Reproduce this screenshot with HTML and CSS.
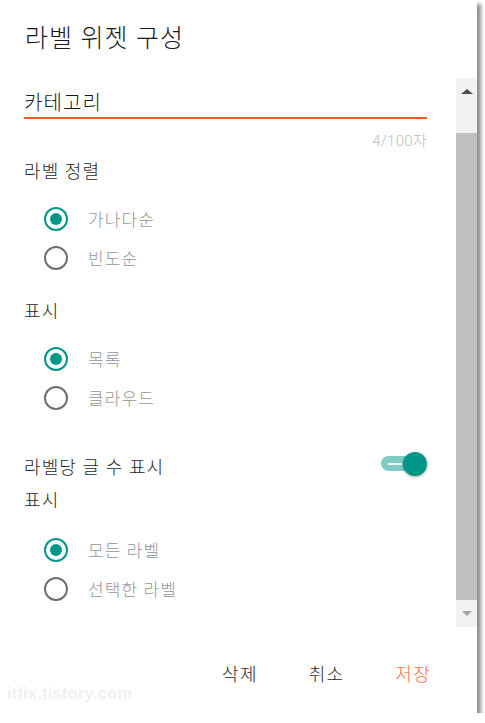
FILE: index.html
```html
<!DOCTYPE html>
<html lang="ko">
<head>
    <meta charset="UTF-8">
    <meta name="viewport" content="width=device-width, initial-scale=1.0">
    <title>라벨 위젯 구성</title>
    <link rel="stylesheet" href="styles.css">
</head>
<body>
    <div class="dialog">
        <h1 class="dialog-title">라벨 위젯 구성</h1>
        <div class="dialog-body">
            <div class="content">
                <div class="field-input">카테고리</div>
                <div class="field-counter">4/100자</div>

                <div class="section-label">라벨 정렬</div>
                <div class="radio-group">
                    <div class="radio-row"><span class="radio checked"></span><span class="radio-text">가나다순</span></div>
                    <div class="radio-row"><span class="radio"></span><span class="radio-text">빈도순</span></div>
                </div>

                <div class="section-label gap-top">표시</div>
                <div class="radio-group">
                    <div class="radio-row"><span class="radio checked"></span><span class="radio-text">목록</span></div>
                    <div class="radio-row"><span class="radio"></span><span class="radio-text">클라우드</span></div>
                </div>

                <div class="toggle-row">
                    <div class="section-label">라벨당 글 수 표시</div>
                    <div class="switch">
                        <span class="switch-track"></span>
                        <span class="switch-thumb"></span>
                    </div>
                </div>
                <div class="section-label small-gap">표시</div>
                <div class="radio-group last">
                    <div class="radio-row"><span class="radio checked"></span><span class="radio-text">모든 라벨</span></div>
                    <div class="radio-row"><span class="radio"></span><span class="radio-text">선택한 라벨</span></div>
                </div>
            </div>
            <div class="scrollbar">
                <div class="scroll-btn"><span class="arrow-up"></span></div>
                <div class="scroll-track"></div>
                <div class="scroll-thumb"></div>
                <div class="scroll-btn"><span class="arrow-down"></span></div>
            </div>
        </div>
        <div class="dialog-actions">
            <button class="action-button">삭제</button>
            <button class="action-button">취소</button>
            <button class="action-button primary">저장</button>
        </div>
        <div class="watermark">itfix.tistory.com</div>
    </div>
</body>
</html>
```

FILE: styles.css
```css
body {
    margin: 0;
    background: #fff;
    font-family: Roboto, "Noto Sans CJK KR", sans-serif;
    font-weight: 300;
    letter-spacing: 0.07em;
}
.dialog {
    position: relative;
    width: 477px;
    height: 713px;
    background: #fff;
    box-shadow: 4px 4px 4px rgba(0, 0, 0, 0.45);
    display: flex;
    flex-direction: column;
}
.dialog-title {
    margin: 0 0 24px;
    padding: 24px 25px 0;
    font-size: 25px;
    font-weight: 300;
    line-height: 30px;
    color: #1a1a1a;
}
.dialog-body {
    display: flex;
    height: 549px;
}
.content {
    flex: 1;
    padding: 0 29px 0 24px;
}
.field-input {
    padding-top: 11px;
    font-size: 20px;
    line-height: 28px;
    color: #1a1a1a;
    border-bottom: 2px solid #ff5722;
}
.field-counter {
    margin-top: 12px;
    text-align: right;
    font-size: 15px;
    line-height: 20px;
    letter-spacing: 0.02em;
    color: #bdbdbd;
}
.section-label {
    margin-top: 9px;
    font-size: 18px;
    line-height: 24px;
    color: #1f1f1f;
}
.section-label.gap-top {
    margin-top: 23px;
}
.section-label.small-gap {
    margin-top: 9px;
}
.radio-group {
    margin-top: 15px;
}
.radio-group.last {
    margin-top: 17px;
}
.radio-row {
    display: flex;
    align-items: center;
    gap: 20px;
    height: 39px;
    padding-left: 20px;
}
.radio {
    width: 24px;
    height: 24px;
    box-sizing: border-box;
    border: 2px solid #6f6f6f;
    border-radius: 50%;
    display: flex;
    align-items: center;
    justify-content: center;
}
.radio.checked {
    border: 2.5px solid #009688;
}
.radio.checked::after {
    content: "";
    width: 12px;
    height: 12px;
    border-radius: 50%;
    background: #009688;
}
.radio-text {
    font-size: 17px;
    color: #959595;
}
.toggle-row {
    margin-top: 30px;
    display: flex;
    justify-content: space-between;
    align-items: center;
}
.switch {
    position: relative;
    width: 46px;
    height: 24px;
    display: flex;
    align-items: center;
}
.switch-track {
    width: 36px;
    height: 15px;
    border-radius: 8px;
    background: #80cbc4;
}
.switch-track::after {
    content: "";
    display: block;
    width: 14px;
    height: 2px;
    margin: 6.5px 0 0 7px;
    background: rgba(255, 255, 255, 0.8);
}
.switch-thumb {
    position: absolute;
    right: 0;
    top: 0;
    width: 24px;
    height: 24px;
    border-radius: 50%;
    background: #009688;
    box-shadow: 0 1px 3px rgba(0, 0, 0, 0.35);
}
.scrollbar {
    width: 21px;
    display: flex;
    flex-direction: column;
    background: #f1f1f1;
}
.scroll-btn {
    height: 27px;
    display: flex;
    align-items: center;
    justify-content: center;
}
.scroll-track {
    height: 28px;
}
.scroll-thumb {
    flex: 1;
    background: #c1c1c1;
}
.arrow-up {
    border-left: 6px solid transparent;
    border-right: 6px solid transparent;
    border-bottom: 5px solid #505050;
}
.arrow-down {
    border-left: 5px solid transparent;
    border-right: 5px solid transparent;
    border-top: 5px solid #a3a3a3;
}
.dialog-actions {
    margin-top: 30px;
    padding-right: 21px;
    display: flex;
    justify-content: flex-end;
}
.action-button {
    background: none;
    border: none;
    padding: 0 25px 0 26px;
    font-family: Roboto, "Noto Sans CJK KR", sans-serif;
    font-size: 18px;
    font-weight: 300;
    letter-spacing: 0.07em;
    line-height: 36px;
    color: #1f1f1f;
    cursor: pointer;
}
.action-button.primary {
    color: #ff6e4a;
}
.watermark {
    position: absolute;
    left: 7px;
    top: 684px;
    font-family: "Liberation Sans", Arial, sans-serif;
    font-size: 17px;
    font-weight: bold;
    letter-spacing: 0;
    color: rgba(0, 0, 0, 0.08);
}
```
